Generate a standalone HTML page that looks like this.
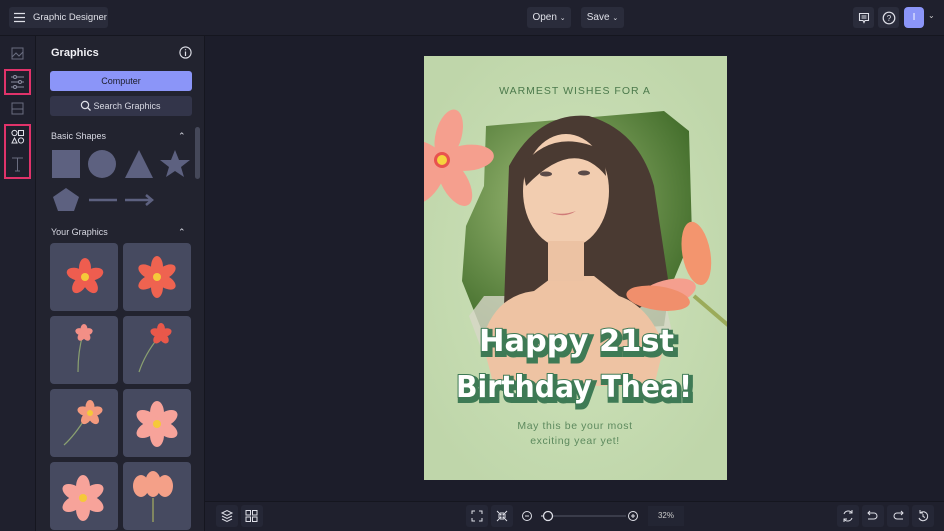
<!DOCTYPE html>
<html><head><meta charset="utf-8"><style>
*{box-sizing:border-box;margin:0;padding:0}
body{width:944px;height:531px;overflow:hidden;background:#1c1d2a;font-family:"Liberation Sans",sans-serif;color:#e6e7ee;position:relative}
.abs{position:absolute}
.btn{position:absolute;background:#2a2c3b;border-radius:3px;font-size:10px;color:#dfe0e8;display:flex;align-items:center;justify-content:center;white-space:nowrap}
.tile{position:absolute;width:68px;height:68px;background:#464a60;border-radius:4px;overflow:hidden}
.ib{position:absolute;width:22px;height:22px;background:#252736;border-radius:3px}
</style></head><body>
<!-- top bar -->
<div class="abs" style="left:0;top:0;width:944px;height:36px;background:#1f202d;border-bottom:1px solid #15161f"></div>
<div class="btn" style="left:9px;top:7px;width:99px;height:21px;justify-content:flex-start;padding-left:24px;font-size:9.5px">Graphic Designer</div>
<svg class="abs" style="left:14px;top:12px" width="12" height="11"><path d="M0 1.5H11M0 5.5H11M0 9.5H11" stroke="#dfe0e8" stroke-width="1.3"/></svg>
<div class="btn" style="left:527px;top:7px;width:44px;height:21px">Open&nbsp;<span style="font-size:7px">⌄</span></div>
<div class="btn" style="left:581px;top:7px;width:43px;height:21px">Save&nbsp;<span style="font-size:7px">⌄</span></div>
<div class="btn" style="left:853px;top:7px;width:21px;height:21px"><svg width="12" height="12"><path d="M1.5 1.5H10.5V8.5H7L6 10.5L5 8.5H1.5Z M3.5 4H8.5M3.5 6H8.5" stroke="#dfe0e8" fill="none" stroke-width="1.1"/></svg></div>
<div class="btn" style="left:878px;top:7px;width:21px;height:21px"><svg width="14" height="14"><circle cx="7" cy="7" r="5.8" stroke="#dfe0e8" fill="none" stroke-width="1.2"/><text x="7" y="10" font-size="8" fill="#dfe0e8" text-anchor="middle" font-family="Liberation Sans">?</text></svg></div>
<div class="abs" style="left:904px;top:7px;width:20px;height:21px;background:#8b95f8;border-radius:4px;font-size:10px;color:#fff;text-align:center;line-height:21px">I</div>
<div class="abs" style="left:928px;top:11px;font-size:8px;color:#ccc">⌄</div>
<!-- left rail -->
<div class="abs" style="left:0;top:36px;width:36px;height:495px;background:#1f202d;border-right:1px solid #15161f"></div>
<svg class="abs" style="left:0;top:36px" width="36" height="150">
<rect x="12" y="12" width="11" height="11" stroke="#6a6d80" fill="none"/><path d="M12 21L16 17L19 20L23 16" stroke="#6a6d80" fill="none"/>
<rect x="5" y="34" width="25" height="24" stroke="#e0336a" stroke-width="2" fill="none"/>
<path d="M11 41H24M11 46H24M11 51H24" stroke="#8a8da0"/><circle cx="15" cy="41" r="1.5" fill="#1f202d" stroke="#8a8da0"/><circle cx="20" cy="46" r="1.5" fill="#1f202d" stroke="#8a8da0"/><circle cx="15" cy="51" r="1.5" fill="#1f202d" stroke="#8a8da0"/>
<rect x="12" y="67" width="11" height="11" stroke="#6a6d80" fill="none"/><path d="M12 73H23" stroke="#6a6d80"/>
<rect x="5" y="89" width="25" height="53" stroke="#e0336a" stroke-width="2" fill="none"/>
<circle cx="14.5" cy="97" r="2.6" stroke="#dfe0e8" fill="none"/><rect x="18.5" y="94.5" width="5" height="5" stroke="#dfe0e8" fill="none"/><path d="M14.5 102L17 107H12Z" stroke="#dfe0e8" fill="none"/><circle cx="21" cy="104.5" r="2.6" stroke="#dfe0e8" fill="none"/>
<path d="M12 122H23M17.5 122V135M15 135H20" stroke="#6a6d80" fill="none"/>
</svg>
<!-- panel -->
<div class="abs" style="left:36px;top:36px;width:169px;height:495px;background:#22232f;border-right:1px solid #15161f"></div>
<div class="abs" style="left:51px;top:47px;font-size:11px;font-weight:bold;color:#f0f0f5">Graphics</div>
<svg class="abs" style="left:179px;top:46px" width="13" height="13"><circle cx="6.5" cy="6.5" r="5.6" stroke="#dfe0e8" fill="none" stroke-width="1.1"/><path d="M6.5 5.5V10M6.5 3.2V4.3" stroke="#dfe0e8" stroke-width="1.2"/></svg>
<div class="abs" style="left:50px;top:71px;width:142px;height:20px;background:#8b95f8;border-radius:3px;font-size:9px;color:#1c1d2a;text-align:center;line-height:20px">Computer</div>
<div class="abs" style="left:50px;top:96px;width:142px;height:20px;background:#33354a;border-radius:3px;font-size:9px;color:#d8d9e3;text-align:center;line-height:20px;padding-left:12px">Search Graphics</div>
<svg class="abs" style="left:80px;top:100px" width="12" height="12"><circle cx="5" cy="5" r="3.6" stroke="#dfe0e8" fill="none" stroke-width="1.2"/><path d="M7.6 7.6L10.5 10.5" stroke="#dfe0e8" stroke-width="1.3"/></svg>
<div class="abs" style="left:51px;top:131px;font-size:9px;color:#d8d9e3">Basic Shapes</div>
<div class="abs" style="left:178px;top:131px;font-size:9px;color:#d8d9e3">⌃</div>
<div class="abs" style="left:195px;top:127px;width:5px;height:52px;background:#454859;border-radius:3px"></div>
<svg class="abs" style="left:50px;top:148px" width="145" height="66">
<rect x="2" y="2" width="28" height="28" fill="#5d6180"/><circle cx="52" cy="16" r="14" fill="#5d6180"/><path d="M89 2L103 30H75Z" fill="#5d6180"/><path d="M125 2L129 12L140 12L131 19L134 29L125 23L116 29L119 19L110 12L121 12Z" fill="#5d6180"/>
<path d="M16 40L29 49L24 63H8L3 49Z" fill="#5d6180"/><path d="M39 52H67" stroke="#5d6180" stroke-width="2.5"/><path d="M75 52H100M96 47L102 52L96 57" stroke="#5d6180" stroke-width="2.5" fill="none"/>
</svg>
<div class="abs" style="left:51px;top:227px;font-size:9px;color:#d8d9e3">Your Graphics</div>
<div class="abs" style="left:178px;top:227px;font-size:9px;color:#d8d9e3">⌃</div>
<div class="tile" style="left:50px;top:243px"><svg width="68" height="68"><g transform="translate(35,34)" fill="#ee5d4f"><ellipse cy="-9" rx="6" ry="10"/><ellipse cy="-9" rx="6" ry="10" transform="rotate(72)"/><ellipse cy="-9" rx="6" ry="10" transform="rotate(144)"/><ellipse cy="-9" rx="6" ry="10" transform="rotate(216)"/><ellipse cy="-9" rx="6" ry="10" transform="rotate(288)"/><circle r="4" fill="#f5c93a"/></g></svg></div>
<div class="tile" style="left:123px;top:243px"><svg width="68" height="68"><g transform="translate(34,34)" fill="#ef6350"><ellipse cy="-10" rx="6" ry="11"/><ellipse cy="-10" rx="6" ry="11" transform="rotate(60)"/><ellipse cy="-10" rx="6" ry="11" transform="rotate(120)"/><ellipse cy="-10" rx="6" ry="11" transform="rotate(180)"/><ellipse cy="-10" rx="6" ry="11" transform="rotate(240)"/><ellipse cy="-10" rx="6" ry="11" transform="rotate(300)"/><circle r="4" fill="#f5c93a"/></g></svg></div>
<div class="tile" style="left:50px;top:316px"><svg width="68" height="68"><path d="M33 18Q28 35 28 56" stroke="#8aa070" stroke-width="1.2" fill="none"/><g transform="translate(34,17)" fill="#f28f86"><ellipse cy="-4" rx="3.5" ry="5"/><ellipse cy="-4" rx="3.5" ry="5" transform="rotate(72)"/><ellipse cy="-4" rx="3.5" ry="5" transform="rotate(144)"/><ellipse cy="-4" rx="3.5" ry="5" transform="rotate(216)"/><ellipse cy="-4" rx="3.5" ry="5" transform="rotate(288)"/></g></svg></div>
<div class="tile" style="left:123px;top:316px"><svg width="68" height="68"><path d="M35 22Q22 38 16 56" stroke="#8aa070" stroke-width="1.2" fill="none"/><g transform="translate(38,18)" fill="#e9584a"><ellipse cy="-5" rx="4" ry="6"/><ellipse cy="-5" rx="4" ry="6" transform="rotate(72)"/><ellipse cy="-5" rx="4" ry="6" transform="rotate(144)"/><ellipse cy="-5" rx="4" ry="6" transform="rotate(216)"/><ellipse cy="-5" rx="4" ry="6" transform="rotate(288)"/></g></svg></div>
<div class="tile" style="left:50px;top:389px"><svg width="68" height="68"><path d="M36 28Q25 46 14 56" stroke="#8aa070" stroke-width="1.2" fill="none"/><g transform="translate(40,24)" fill="#f49a7e"><ellipse cy="-6" rx="4.5" ry="7"/><ellipse cy="-6" rx="4.5" ry="7" transform="rotate(72)"/><ellipse cy="-6" rx="4.5" ry="7" transform="rotate(144)"/><ellipse cy="-6" rx="4.5" ry="7" transform="rotate(216)"/><ellipse cy="-6" rx="4.5" ry="7" transform="rotate(288)"/><circle r="3" fill="#f5c93a"/></g></svg></div>
<div class="tile" style="left:123px;top:389px"><svg width="68" height="68"><g transform="translate(34,35)" fill="#f7a39a"><ellipse cy="-11" rx="7" ry="12"/><ellipse cy="-11" rx="7" ry="12" transform="rotate(60)"/><ellipse cy="-11" rx="7" ry="12" transform="rotate(120)"/><ellipse cy="-11" rx="7" ry="12" transform="rotate(180)"/><ellipse cy="-11" rx="7" ry="12" transform="rotate(240)"/><ellipse cy="-11" rx="7" ry="12" transform="rotate(300)"/><circle r="4" fill="#f5c93a"/></g></svg></div>
<div class="tile" style="left:50px;top:462px"><svg width="68" height="68"><g transform="translate(33,36)" fill="#f7a39a"><ellipse cy="-11" rx="7" ry="12"/><ellipse cy="-11" rx="7" ry="12" transform="rotate(60)"/><ellipse cy="-11" rx="7" ry="12" transform="rotate(120)"/><ellipse cy="-11" rx="7" ry="12" transform="rotate(180)"/><ellipse cy="-11" rx="7" ry="12" transform="rotate(240)"/><ellipse cy="-11" rx="7" ry="12" transform="rotate(300)"/><circle r="4" fill="#f5c93a"/></g></svg></div>
<div class="tile" style="left:123px;top:462px"><svg width="68" height="68"><path d="M30 36V60" stroke="#9aa060" stroke-width="1.4"/><g fill="#f4a088"><ellipse cx="18" cy="24" rx="8" ry="11"/><ellipse cx="42" cy="24" rx="8" ry="11"/><ellipse cx="30" cy="22" rx="8" ry="13"/></g></svg></div>
<!-- canvas -->
<div class="abs" style="left:424px;top:56px;width:303px;height:424px;background:#c6dcb1;overflow:hidden">
<svg width="303" height="424">
<defs><radialGradient id="bg" cx="0.5" cy="0.5" r="0.6"><stop offset="0" stop-color="#cfe3bb"/><stop offset="1" stop-color="#bfd6aa"/></radialGradient>
<radialGradient id="leaf" cx="0.4" cy="0.4" r="0.7"><stop offset="0" stop-color="#9fbd78"/><stop offset="1" stop-color="#3f6a28"/></radialGradient></defs>
<rect width="303" height="424" fill="url(#bg)"/>
<path d="M62 70L240 55L265 75L268 180L245 235L240 270L60 280L38 225L42 170L60 130Z" fill="url(#leaf)"/>
<path d="M45 260L60 240H240L250 285L60 300Z" fill="#d7d7c8" opacity=".8"/>
<path d="M85 110Q115 55 165 60Q215 75 230 130L245 230L205 260L80 250Z" fill="#4a3a32"/>
<path d="M58 285Q70 240 110 235L130 220H170L195 240Q225 250 240 290L230 330H70Z" fill="#eec3a3"/>
<ellipse cx="142" cy="135" rx="43" ry="57" fill="#f2cdb0"/>
<path d="M98 110Q130 70 180 95L182 120Q150 80 102 130Z" fill="#4a3a32"/>
<ellipse cx="122" cy="118" rx="6" ry="2.5" fill="#5a4a48"/><ellipse cx="160" cy="117" rx="6" ry="2.5" fill="#5a4a48"/>
<path d="M126 156Q138 160 152 155Q140 163 126 156Z" fill="#cf7a78"/>
<rect x="124" y="185" width="36" height="40" fill="#ecc2a3"/>
<g transform="translate(18,104)"><g fill="#f59f8e"><ellipse cy="-26" rx="13" ry="26" transform="rotate(15)"/><ellipse cy="-26" rx="13" ry="26" transform="rotate(85)"/><ellipse cy="-26" rx="13" ry="26" transform="rotate(150)"/><ellipse cy="-26" rx="13" ry="26" transform="rotate(215)"/><ellipse cy="-26" rx="13" ry="26" transform="rotate(285)"/></g><circle r="8" fill="#e8524f"/><circle r="5" fill="#f6d33e"/></g>
<g transform="translate(290,240)"><ellipse cx="-10" cy="-45" rx="14" ry="32" fill="#f3956e" transform="rotate(-10)"/><ellipse cx="-45" cy="-15" rx="30" ry="13" fill="#f59f8e" transform="rotate(-15)"/><ellipse cx="-55" cy="10" rx="32" ry="12" fill="#f08f6c" transform="rotate(8)"/><path d="M-20 0L15 30" stroke="#9bab5a" stroke-width="4"/></g>
<text x="151" y="38" font-family="Liberation Sans" font-size="10.5" fill="#4c7a4c" text-anchor="middle" letter-spacing="1">WARMEST WISHES FOR A</text>
<g font-family="DejaVu Sans" font-weight="bold" font-size="30">
<text x="57" y="298" textLength="195" lengthAdjust="spacingAndGlyphs" fill="#3e7a55" stroke="#3e7a55" stroke-width="6">Happy 21st</text>
<text x="55" y="295" textLength="195" lengthAdjust="spacingAndGlyphs" fill="#fff" stroke="#3e7a55" stroke-width="2" paint-order="stroke">Happy 21st</text>
<text x="34" y="344" textLength="236" lengthAdjust="spacingAndGlyphs" fill="#3e7a55" stroke="#3e7a55" stroke-width="6">Birthday Thea!</text>
<text x="32" y="341" textLength="236" lengthAdjust="spacingAndGlyphs" fill="#fff" stroke="#3e7a55" stroke-width="2" paint-order="stroke">Birthday Thea!</text>
</g>
<text x="151" y="373" font-family="Liberation Sans" font-size="10.5" fill="#5d8a5e" text-anchor="middle" letter-spacing=".6">May this be your most</text>
<text x="151" y="388" font-family="Liberation Sans" font-size="10.5" fill="#5d8a5e" text-anchor="middle" letter-spacing=".6">exciting year yet!</text>
</svg></div>
<!-- bottom bar -->
<div class="abs" style="left:205px;top:501px;width:739px;height:30px;background:#1f202d;border-top:1px solid #15161f"></div>
<div class="ib" style="left:216px;top:505px"></div><div class="ib" style="left:241px;top:505px"></div>
<svg class="abs" style="left:216px;top:505px" width="50" height="22"><path d="M6 8L11 5.5L16 8L11 10.5Z M6 11L11 13.5L16 11 M6 14L11 16.5L16 14" stroke="#dfe0e8" fill="none"/><path d="M30 5.5h4.5v4.5h-4.5z M36.5 5.5h4.5v4.5h-4.5z M30 12h4.5v4.5h-4.5z M36.5 12h4.5v4.5h-4.5z" stroke="#dfe0e8" fill="none"/></svg>
<div class="ib" style="left:466px;top:505px"></div><div class="ib" style="left:491px;top:505px"></div>
<svg class="abs" style="left:466px;top:505px" width="190" height="22"><path d="M6 9V6H9M13 6H16V9M16 13V16H13M9 16H6V13" stroke="#dfe0e8" fill="none"/><path d="M31 6L35 10M35 7V10H32M41 6L37 10M37 7V10H40M31 16L35 12M35 15V12H32M41 16L37 12M37 15V12H40" stroke="#dfe0e8" fill="none"/>
<circle cx="61" cy="11" r="4.5" stroke="#dfe0e8" fill="none"/><path d="M59 11H63" stroke="#dfe0e8"/><path d="M76 11H160" stroke="#555868"/><circle cx="82" cy="11" r="4.5" stroke="#dfe0e8" fill="#1f202d" stroke-width="1.3"/><path d="M75 11h2" stroke="#dfe0e8"/>
<circle cx="167" cy="11" r="4.5" stroke="#dfe0e8" fill="none"/><path d="M165 11H169M167 9V13" stroke="#dfe0e8"/></svg>
<div class="abs" style="left:648px;top:506px;width:36px;height:20px;background:#232533;font-size:8px;color:#ccc;text-align:center;line-height:20px">32%</div>
<div class="ib" style="left:837px;top:505px"></div><div class="ib" style="left:862px;top:505px"></div><div class="ib" style="left:887px;top:505px"></div><div class="ib" style="left:912px;top:505px"></div>
<svg class="abs" style="left:837px;top:505px" width="97" height="22"><path d="M7 9A4.5 4.5 0 0 1 15 8M15 13A4.5 4.5 0 0 1 7 14M15 5V8H12M7 17V14H10" stroke="#dfe0e8" fill="none"/><path d="M31 8H37A3 3 0 0 1 37 14H31M33 6L31 8L33 10" stroke="#dfe0e8" fill="none"/><path d="M66 8H60A3 3 0 0 0 60 14H66M64 6L66 8L64 10" stroke="#dfe0e8" fill="none"/><path d="M83 8A4.5 4.5 0 1 1 82 13M83 5V8H86M86 9V11.5L88 12.5" stroke="#dfe0e8" fill="none"/></svg>
</body></html>
